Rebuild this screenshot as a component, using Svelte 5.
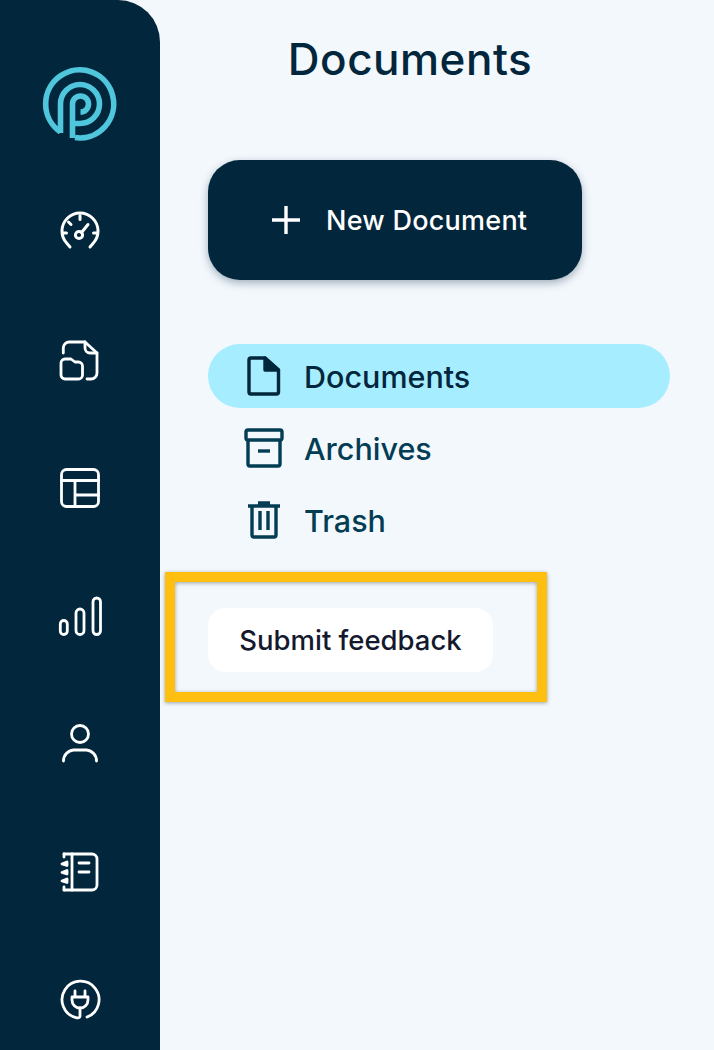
<script>
	const railIcons = ['gauge', 'files', 'table', 'bars', 'person', 'notebook', 'plug'];
	const navItems = [
		{ label: 'Documents', icon: 'doc', active: true },
		{ label: 'Archives', icon: 'archive', active: false },
		{ label: 'Trash', icon: 'trash', active: false }
	];
</script>

<div class="page">
	<aside class="rail">
		<div class="logo">
			<svg width="80" height="80" viewBox="40 64 80 80" fill="none" stroke="#4fc6dc" stroke-width="5.6">
				<path d="M60.5 132A34 34 0 1 1 75 137.6" />
				<path d="M60.5 133V104A19.5 19.5 0 1 1 80 123.5H72" />
				<path d="M72.5 138V104A8 8 0 1 1 80.5 112" />
			</svg>
		</div>
		{#each railIcons as icon}
			<div class="rail-item">
				<svg width="40" height="40" viewBox="0 0 40 40" fill="none" stroke="#fff" stroke-width="2.8" stroke-linecap="round" stroke-linejoin="round">
					{#if icon === 'gauge'}
						<path d="M10 35L7 31.5A18 18 0 1 1 33 31.5L30 35" stroke-width="3" />
						<path d="M20 3.500v4M8.500 10l2.500 2.500M2.500 21h4M33.500 21h4" stroke-width="3" />
						<circle cx="19" cy="23" r="3.6" stroke-width="3" />
						<path d="M21.5 20.5L28 12.500" stroke-width="3" />
					{:else if icon === 'files'}
						<path d="M3.3 13V8a6 6 0 0 1 6-6H25L37 13V33a6 6 0 0 1-6 6H27" />
						<path d="M25 2V8a5 5 0 0 0 5 5H37" />
						<path d="M1 23a4 4 0 0 1 4-4h6l4 3h3.5a4 4 0 0 1 4 4V35a4 4 0 0 1-4 4H5a4 4 0 0 1-4-4Z" />
					{:else if icon === 'table'}
						<rect x="1.5" y="1.5" width="37" height="37" rx="5" />
						<path d="M1.5 12.5H38.5M15 12.5V38.5M15 27H38.5" />
					{:else if icon === 'bars'}
						<rect x="0.3" y="24.5" width="7" height="14" rx="3.5" />
						<rect x="16" y="13" width="8" height="25.5" rx="4" />
						<rect x="33" y="2" width="7.5" height="36.5" rx="3.75" />
					{:else if icon === 'person'}
						<circle cx="20" cy="10" r="8.5" />
						<path d="M3.5 37a11 11 0 0 1 10-11h13a11 11 0 0 1 10 11" />
					{:else if icon === 'notebook'}
						<path d="M4 2H32a5 5 0 0 1 5 5V33a5 5 0 0 1-5 5H4" />
						<path d="M12 2V38M19 11H29M19 20H29" />
						<path d="M4 2V5M4 38V35" />
						<path d="M2 12l5-2v3.5ZM2 20.5l5-2v3.5ZM2 29l5-2v3.5Z" fill="#fff" />
					{:else if icon === 'plug'}
						<path d="M27 37A18.5 18.5 0 1 0 16 37.6C18 38.2 20 38 20 36V28" />
						<path d="M12 17H28V20a8 8 0 0 1-16 0ZM15 11V17M25 11V17" />
					{/if}
				</svg>
			</div>
		{/each}
	</aside>

	<main class="main">
		<h1>Documents</h1>

		<button class="new-doc">
			<svg width="28" height="28" viewBox="0 0 28 28" stroke="#fff" stroke-width="3.4">
				<path d="M14 0V28M0 14H28" />
			</svg>
			<span>New Document</span>
		</button>

		<nav class="nav">
			{#each navItems as item}
				<div class="nav-item" class:active={item.active}>
					<svg width="48" height="48" viewBox="0 0 48 48" fill="none" stroke="currentColor" stroke-width="3.4" stroke-linejoin="round">
						{#if item.icon === 'doc'}
							<path d="M11 6H25L38.5 18V40a2 2 0 0 1-2 2H11a2 2 0 0 1-2-2V8a2 2 0 0 1 2-2Z" />
							<path d="M25 6V18H38.5Z" fill="currentColor" />
						{:else if item.icon === 'archive'}
							<rect x="6" y="6" width="36" height="10" rx="2" />
							<path d="M8 15V40a2 2 0 0 0 2 2H38a2 2 0 0 0 2-2V15" />
							<path d="M18 27H30" />
						{:else}
							<path d="M8 10H40M18 7H30" />
							<path d="M12 10V39a2 2 0 0 0 2 2H34a2 2 0 0 0 2-2V10" />
							<path d="M20 15V34M28 15V34" />
						{/if}
					</svg>
					<span>{item.label}</span>
				</div>
			{/each}
		</nav>

		<div class="feedback">
			<button class="submit">Submit feedback</button>
			<div class="highlight"></div>
		</div>
	</main>
</div>

<style>
	:global(body) {
		background: #f3f8fd;
		font-family: Inter, 'Noto Sans', sans-serif;
	}

	.page {
		display: flex;
		height: 1050px;
		overflow: hidden;
	}

	.rail {
		flex: 0 0 160px;
		background: #02263c;
		border-top-right-radius: 42px;
		display: flex;
		flex-direction: column;
		align-items: center;
		padding-top: 64px;
		box-sizing: border-box;
	}

	.logo {
		height: 80px;
		margin-bottom: 24px;
	}

	.rail-item {
		height: 128px;
		display: flex;
		align-items: center;
		justify-content: center;
		flex: none;
	}

	.rail-item svg,
	.logo svg {
		display: block;
		overflow: visible;
	}

	.main {
		flex: 1;
		padding: 0 44px 0 48px;
	}

	h1 {
		width: 404px;
		margin: 0;
		height: 160px;
		padding-top: 31px;
		box-sizing: border-box;
		text-align: center;
		font-size: 44px;
		letter-spacing: 0.5px;
		line-height: 56px;
		font-weight: 500;
		color: #02263c;
	}

	.new-doc {
		width: 374px;
		height: 120px;
		border: none;
		border-radius: 32px;
		background: #02263c;
		color: #fff;
		box-shadow: 0 3px 8px rgba(2, 38, 60, 0.35);
		display: flex;
		align-items: center;
		gap: 26px;
		padding: 0 0 0 64px;
		font: inherit;
		font-size: 27px;
		letter-spacing: 0.25px;
		font-weight: 500;
	}

	.nav {
		margin-top: 64px;
		display: flex;
		flex-direction: column;
		gap: 8px;
	}

	.nav-item {
		height: 64px;
		border-radius: 32px;
		display: flex;
		align-items: center;
		gap: 16px;
		padding-left: 32px;
		font-size: 30.5px;
		font-weight: 500;
		color: #033d54;
	}

	.nav-item.active {
		background: #a5edff;
		color: #02263c;
	}

	.feedback {
		position: relative;
		margin-top: 56px;
		width: 285px;
	}

	.submit {
		display: block;
		width: 285px;
		height: 64px;
		border: none;
		border-radius: 18px;
		background: #fff;
		color: #14192e;
		font: inherit;
		font-size: 27.5px;
		font-weight: 500;
	}

	.highlight {
		position: absolute;
		left: -43px;
		top: -36px;
		width: 382px;
		height: 130px;
		box-sizing: border-box;
		border: 10px solid #ffbf10;
		box-shadow: 0 1px 4px rgba(0, 0, 0, 0.35), inset 0 1px 4px rgba(0, 0, 0, 0.35);
		pointer-events: none;
	}
</style>
